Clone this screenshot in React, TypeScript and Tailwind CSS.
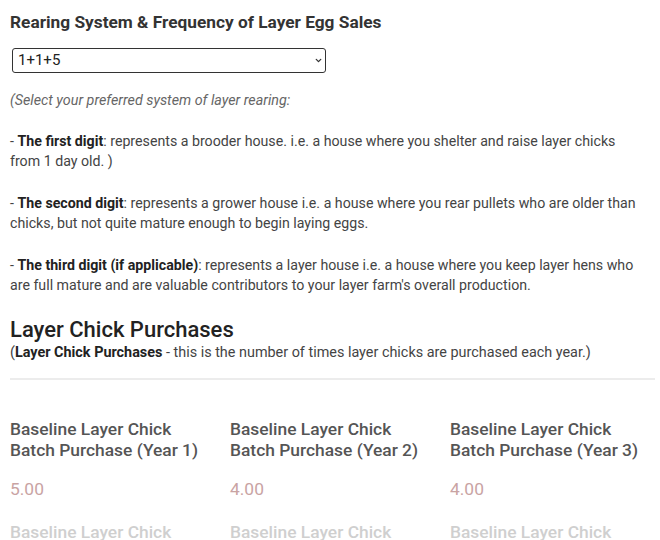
import { ChevronDown } from "lucide-react";

const batches = ["Year 1", "Year 2", "Year 3"];
const values = ["5.00", "4.00", "4.00"];

export default function App() {
  return (
    <div className="h-[540px] overflow-hidden bg-white px-[10px] font-['Roboto',sans-serif] text-[#333]">
      <h2 className="pt-[11px] text-[17.3px] font-bold leading-[22px] text-[#333]">
        Rearing System &amp; Frequency of Layer Egg Sales
      </h2>

      <div className="relative ml-[2px] mt-[15px] flex h-[25px] w-[314px] items-center rounded-[3px] border-[1.5px] border-[#333] px-[5px] text-[15px] text-[#222]">
        1+1+5
        <ChevronDown className="absolute right-[2px] top-[7px] h-[9px] w-[9px] text-[#333]" strokeWidth={3.5} />
      </div>

      <p className="mt-[17px] text-[14.3px] italic leading-[20px] text-[#666]">
        (Select your preferred system of layer rearing:
      </p>

      <div className="mt-[21px] flex w-[635px] flex-col gap-[22px] text-[14.2px] leading-[20px] text-[#444]">
        <p>
          - <b className="text-[#222]">The first digit</b>: represents a brooder house. i.e. a house where you shelter and raise layer chicks
          from 1 day old. )
        </p>
        <p>
          - <b className="text-[#222]">The second digit</b>: represents a grower house i.e. a house where you rear pullets who are older than
          chicks, but not quite mature enough to begin laying eggs.
        </p>
        <p>
          - <b className="text-[#222]">The third digit (if applicable)</b>: represents a layer house i.e. a house where you keep layer hens who
          are full mature and are valuable contributors to your layer farm's overall production.
        </p>
      </div>

      <h3 className="mt-[22px] text-[22px] font-medium leading-[26px] text-[#222]">Layer Chick Purchases</h3>
      <p className="text-[14.4px] leading-[20px] text-[#444]">
        (<b className="text-[#222]">Layer Chick Purchases</b> - this is the number of times layer chicks are purchased each year.)
      </p>

      <hr className="-mr-[5px] mt-[15px] border-t-[2px] border-[#ececec]" />

      <div className="-mr-[5px] mt-[39px] grid grid-cols-3 gap-x-[15px]">
        {batches.map((y, i) => (
          <div key={y}>
            <div className="text-[17.4px] font-medium leading-[21px] text-[#555]">
              Baseline Layer Chick
              <br />
              Batch Purchase ({y})
            </div>
            <div className="mt-[18px] text-[17.4px] leading-[20px] text-[#c9a3a3]">{values[i]}</div>
            <div className="mt-[23px] text-[17.4px] font-medium leading-[21px] text-[#cfcfcf]">Baseline Layer Chick</div>
          </div>
        ))}
      </div>
    </div>
  );
}
